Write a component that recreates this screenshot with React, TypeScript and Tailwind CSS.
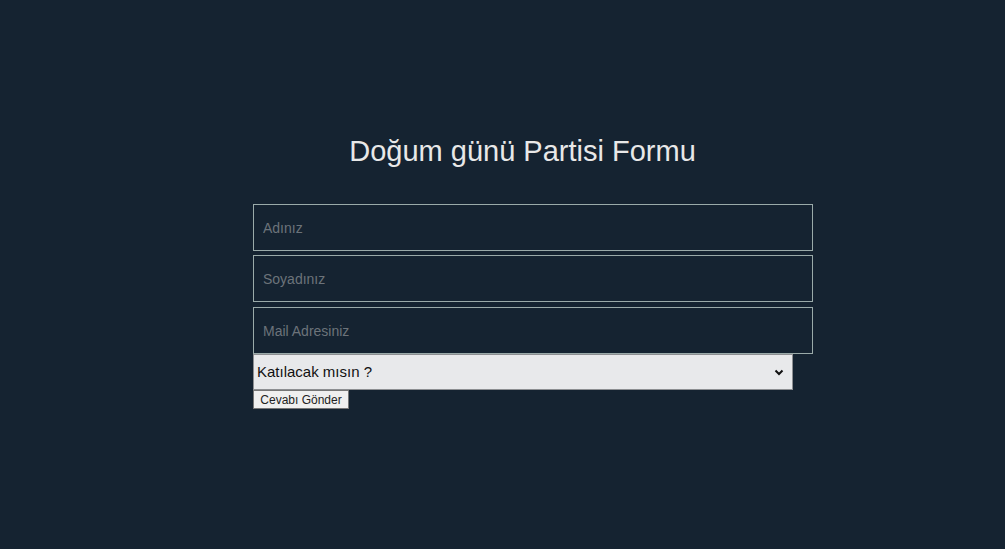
import React from "react";

export default function App() {
  return (
    <div className="min-h-screen h-[549px] w-full bg-[#152331] overflow-hidden" style={{ fontFamily: '"Liberation Sans", Arial, sans-serif' }}>
      <h1 className="pt-[135px] pl-[40px] text-center text-[29px] leading-[33px] text-[#e8e8e8] font-normal">
        Doğum günü Partisi Formu
      </h1>
      <form className="ml-[253px] mt-[36px] flex flex-col items-start w-[560px]" onSubmit={(e) => e.preventDefault()}>
        <input
          placeholder="Adınız"
          className="w-[560px] h-[47px] border border-[#9aaaa9] bg-transparent px-[9px] text-[14px] text-white placeholder:text-[#6c737a] outline-none"
        />
        <input
          placeholder="Soyadınız"
          className="mt-[4px] w-[560px] h-[47px] border border-[#9aaaa9] bg-transparent px-[9px] text-[14px] text-white placeholder:text-[#6c737a] outline-none"
        />
        <input
          placeholder="Mail Adresiniz"
          className="mt-[5px] w-[560px] h-[47px] border border-[#9aaaa9] bg-transparent px-[9px] text-[14px] text-white placeholder:text-[#6c737a] outline-none"
        />
        <div className="w-[540px] h-[36px] border border-[#8d8f92] bg-[#e8e9eb] flex items-center pl-[3px] pr-[6px] text-[15px] text-[#111]">
          <span className="flex-1">Katılacak mısın ?</span>
          <svg width="10" height="7" viewBox="0 0 10 7" className="mr-[2px]">
            <path d="M1.5 1.5 L5 5 L8.5 1.5" stroke="#111" strokeWidth="2" fill="none" />
          </svg>
        </div>
        <button
          type="submit"
          className="h-[19px] w-[96px] border border-[#767676] bg-[#efefef] text-[12px] leading-[16px] text-[#222] flex items-center justify-center"
        >
          Cevabı Gönder
        </button>
      </form>
    </div>
  );
}
